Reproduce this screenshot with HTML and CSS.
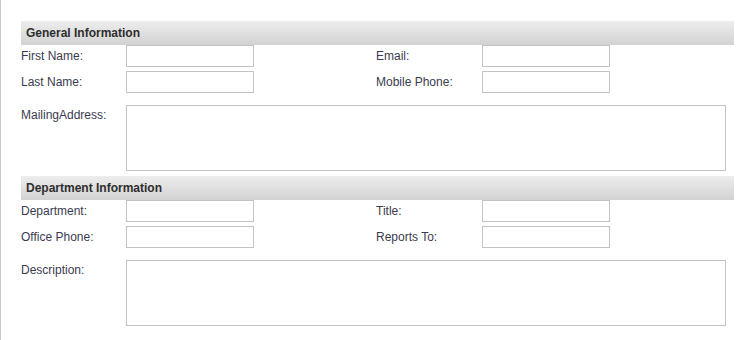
FILE: index.html
```html
<!DOCTYPE html>
<html>
<head>
<meta charset="utf-8">
<link rel="stylesheet" href="styles.css">
</head>
<body>
<div class="page">
  <section class="section">
    <div class="band">General Information</div>
    <div class="grid">
      <label class="lbl">First Name:</label><input class="inp" type="text">
      <label class="lbl lbl-r">Email:</label><input class="inp" type="text">
      <label class="lbl">Last Name:</label><input class="inp" type="text">
      <label class="lbl lbl-r">Mobile Phone:</label><input class="inp" type="text">
    </div>
    <div class="area-row">
      <label class="lbl">MailingAddress:</label><textarea class="area"></textarea>
    </div>
  </section>
  <section class="section">
    <div class="band">Department Information</div>
    <div class="grid">
      <label class="lbl">Department:</label><input class="inp" type="text">
      <label class="lbl lbl-r">Title:</label><input class="inp" type="text">
      <label class="lbl">Office Phone:</label><input class="inp" type="text">
      <label class="lbl lbl-r">Reports To:</label><input class="inp" type="text">
    </div>
    <div class="area-row">
      <label class="lbl">Description:</label><textarea class="area"></textarea>
    </div>
  </section>
</div>
</body>
</html>
```
FILE: styles.css
```css
html, body {
  margin: 0;
  padding: 0;
  background: #fff;
}
.page {
  border-left: 1px solid #c8c8c8;
  min-height: 340px;
  box-sizing: border-box;
  padding: 21px 0 0 20px;
  font-family: "Liberation Sans", Arial, sans-serif;
  font-size: 12px;
  color: #3b3b4f;
}
.section {
  width: 713px;
  margin-bottom: 5px;
}
.band {
  height: 24px;
  box-sizing: border-box;
  padding-left: 5px;
  line-height: 24px;
  font-weight: bold;
  color: #2e2e2e;
  background: linear-gradient(#ededed, #d2d2d2);
}
.grid {
  display: grid;
  grid-template-columns: 105px 128px 122px 106px 128px;
  grid-auto-rows: 22px;
  row-gap: 4px;
}
.lbl {
  display: block;
  line-height: 22px;
  padding-top: 0;
}
.lbl-r {
  grid-column: 4;
}
.inp {
  box-sizing: border-box;
  width: 128px;
  height: 22px;
  margin: 0;
  border: 1px solid #c3c3c3;
  padding: 2px 4px;
  font: inherit;
  background: #fff;
}
.area-row {
  display: grid;
  grid-template-columns: 105px 600px;
  margin-top: 12px;
}
.area-row .lbl {
  line-height: 20px;
}
.area {
  box-sizing: border-box;
  width: 600px;
  height: 66px;
  margin: 0;
  border: 1px solid #c3c3c3;
  padding: 2px 4px;
  font: inherit;
  resize: none;
  background: #fff;
}
```
